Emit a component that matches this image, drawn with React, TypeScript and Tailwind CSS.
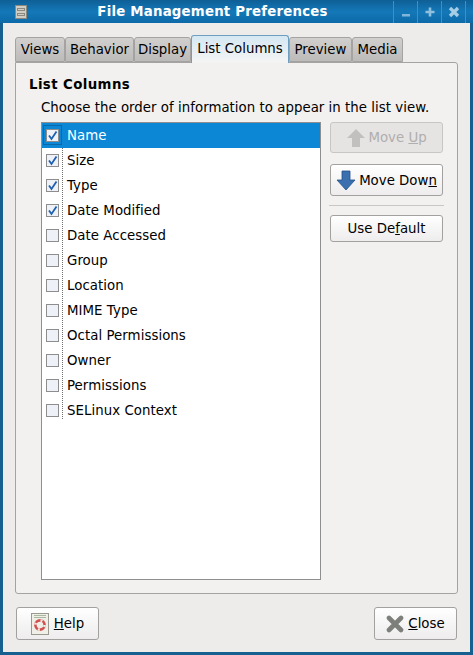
import type { ReactNode } from 'react';

const columns = [
  { name: 'Name', checked: true },
  { name: 'Size', checked: true },
  { name: 'Type', checked: true },
  { name: 'Date Modified', checked: true },
  { name: 'Date Accessed', checked: false },
  { name: 'Group', checked: false },
  { name: 'Location', checked: false },
  { name: 'MIME Type', checked: false },
  { name: 'Octal Permissions', checked: false },
  { name: 'Owner', checked: false },
  { name: 'Permissions', checked: false },
  { name: 'SELinux Context', checked: false },
];

const tabs = [
  { label: 'Views', width: 'w-[50px]' },
  { label: 'Behavior', width: 'w-[69px]' },
  { label: 'Display', width: 'w-[57px]' },
  { label: 'List Columns', width: 'w-[98px]', active: true },
  { label: 'Preview', width: 'w-[63px]' },
  { label: 'Media', width: 'w-[51px]' },
];

function CheckBox({ checked }: { checked: boolean }) {
  return (
    <span className="w-[13px] h-[13px] border border-[#8d8d8d] bg-[#eef2f8] flex items-center justify-center shrink-0">
      {checked && (
        <svg width="11" height="11" viewBox="0 0 11 11">
          <path d="M2 5.5 L4.5 9 L9.5 1.5" fill="none" stroke="#1d5fb0" strokeWidth="1.8" />
        </svg>
      )}
    </span>
  );
}

function Button({ className, disabled, children }: { className: string; disabled?: boolean; children: ReactNode }) {
  return (
    <div
      className={`flex items-center justify-center rounded-[3px] border ${
        disabled
          ? 'border-[#c8c6c4] bg-[#e6e4e3] text-[#b0aeae]'
          : 'border-[#a3a1a0] bg-gradient-to-b from-white to-[#eeecec] text-black'
      } ${className}`}
    >
      {children}
    </div>
  );
}

function WindowButton({ children }: { children: ReactNode }) {
  return (
    <div className="w-[24px] h-[22px] flex items-center justify-center border-l border-[#3d8fc4]">
      <svg width="12" height="12" viewBox="0 0 12 12">
        {children}
      </svg>
    </div>
  );
}

export default function App() {
  return (
    <div className="w-[473px] h-[655px] flex flex-col overflow-hidden bg-[#15608f] text-[13.33px] text-black font-['DejaVu_Sans',sans-serif]">
      <div className="h-[23px] shrink-0 flex items-center bg-gradient-to-b from-[#0f5f96] via-[#1478b8] to-[#0d6aa8]">
        <div className="w-[40px] flex justify-center pl-[1px]">
          <div className="w-[12px] h-[14px] bg-[#d0cdc4] border border-[#8a8a80] flex flex-col justify-center gap-[2px] px-[1px]">
            <div className="h-[3px] border border-[#8a8a82]" />
            <div className="h-[3px] border border-[#8a8a82]" />
          </div>
        </div>
        <div className="flex-1 text-center text-white font-bold text-[13.33px] tracking-[0.2px] pr-[8px]">
          File Management Preferences
        </div>
        <div className="flex mr-[7px] border-r border-[#3d8fc4]">
          <WindowButton>
            <rect x="2" y="8" width="8" height="2.5" fill="#7fb6d9" />
          </WindowButton>
          <WindowButton>
            <path d="M6 1.5 V10.5 M1.5 6 H10.5" stroke="#8fc0de" strokeWidth="2.6" />
          </WindowButton>
          <WindowButton>
            <path d="M2 2 L10 10 M10 2 L2 10" stroke="#a8cee5" strokeWidth="3.2" />
          </WindowButton>
        </div>
      </div>

      <div className="flex-1 mx-[3px] mb-[3px] bg-[#edeceb] px-[12px] flex flex-col">
        <div className="flex items-end h-[39px] pt-[12px]">
          {tabs.map((tab) =>
            tab.active ? (
              <div
                key={tab.label}
                className={`${tab.width} h-[28px] -mb-[1px] z-10 flex items-center justify-center rounded-t-[3px] border border-b-0 border-[#6f9fc0] bg-gradient-to-b from-[#d5e8f3] to-[#f5f4f4] pb-[1px]`}
              >
                {tab.label}
              </div>
            ) : (
              <div
                key={tab.label}
                className={`${tab.width} h-[25px] flex items-center justify-center rounded-t-[3px] border border-[#a5a3a2] bg-gradient-to-b from-[#d2d0cf] to-[#bdbbba] pt-[1px]`}
              >
                {tab.label}
              </div>
            ),
          )}
        </div>

        <div className="h-[532px] rounded-b-[3px] rounded-tr-[3px] border border-[#a5a3a2] bg-[#f2f1f0] pl-[13px] pr-[13px] pt-[13px]">
          <div className="font-bold leading-[17px] tracking-[0.4px]">List Columns</div>
          <div className="mt-[6px] pl-[12px] leading-[17px] whitespace-nowrap tracking-[0.03px]">Choose the order of information to appear in the list view.</div>
          <div className="mt-[6px] pl-[12px] flex">
            <div className="w-[280px] h-[458px] border border-[#8f8f8f] bg-white relative">
              <div className="absolute left-[20px] top-[25px] bottom-[160px] border-l border-dotted border-[#6f6f6f]" />
              {columns.map((col, i) => (
                <div
                  key={col.name}
                  className={`relative h-[25px] flex items-center pl-[4px] ${
                    i === 0 ? 'bg-[#0b87d6] text-white' : ''
                  }`}
                >
                  <CheckBox checked={col.checked} />
                  {i === 0 && (
                    <div className="absolute left-[1px] top-[2px] w-[19px] h-[20px] border border-[#0a68a8]" />
                  )}
                  <span className="ml-[8px] tracking-[0.05px]">{col.name}</span>
                </div>
              ))}
            </div>

            <div className="w-[113px] ml-[9px] flex flex-col">
              <Button className="h-[31px] gap-[2px] pt-[1px]" disabled>
                <svg width="20" height="20" viewBox="0 0 20 20">
                  <path d="M10 1 L19 10 H14 V19 H6 V10 H1 Z" fill="#c2c0bf" />
                </svg>
                <span>
                  Move <span className="underline">U</span>p
                </span>
              </Button>
              <Button className="h-[32px] mt-[11px] gap-[3px] pt-[1px]">
                <svg width="20" height="22" viewBox="0 0 20 22">
                  <path d="M6 1 H14 V10 H19 L10 20 L1 10 H6 Z" fill="#3a6fb0" stroke="#24528c" strokeWidth="0.8" />
                </svg>
                <span>
                  Move Dow<span className="underline">n</span>
                </span>
              </Button>
              <div className="h-px bg-[#c9c7c6] mt-[9px] -mx-px" />
              <Button className="h-[27px] mt-[9px] pt-[1px]">
                <span>
                  Use De<span className="underline">f</span>ault
                </span>
              </Button>
            </div>
          </div>
        </div>

        <div className="flex justify-between items-start pt-[13px] pl-[1px] pr-[1px]">
          <Button className="w-[83px] h-[33px] gap-[5px]">
            <div className="w-[18px] h-[22px] bg-[#efefe8] border border-[#9a9a90] flex flex-col items-center pt-[1px]">
              <div className="w-[12px] h-[3px] border-y border-[#a9b8a0]" />
              <svg width="14" height="14" viewBox="0 0 14 14">
                <circle cx="7" cy="7" r="4.6" fill="none" stroke="#d2504f" strokeWidth="2.6" />
                <circle cx="7" cy="7" r="4.6" fill="none" stroke="#efe8e0" strokeWidth="2.6" strokeDasharray="2 5.2" />
              </svg>
            </div>
            <span>
              <span className="underline">H</span>elp
            </span>
          </Button>
          <Button className="w-[83px] h-[33px] gap-[4px]">
            <svg width="18" height="18" viewBox="0 0 18 18">
              <path d="M3 3 L15 15 M15 3 L3 15" stroke="#7d7f7b" strokeWidth="4.6" strokeLinecap="round" />
            </svg>
            <span>
              <span className="underline">C</span>lose
            </span>
          </Button>
        </div>
      </div>
    </div>
  );
}
